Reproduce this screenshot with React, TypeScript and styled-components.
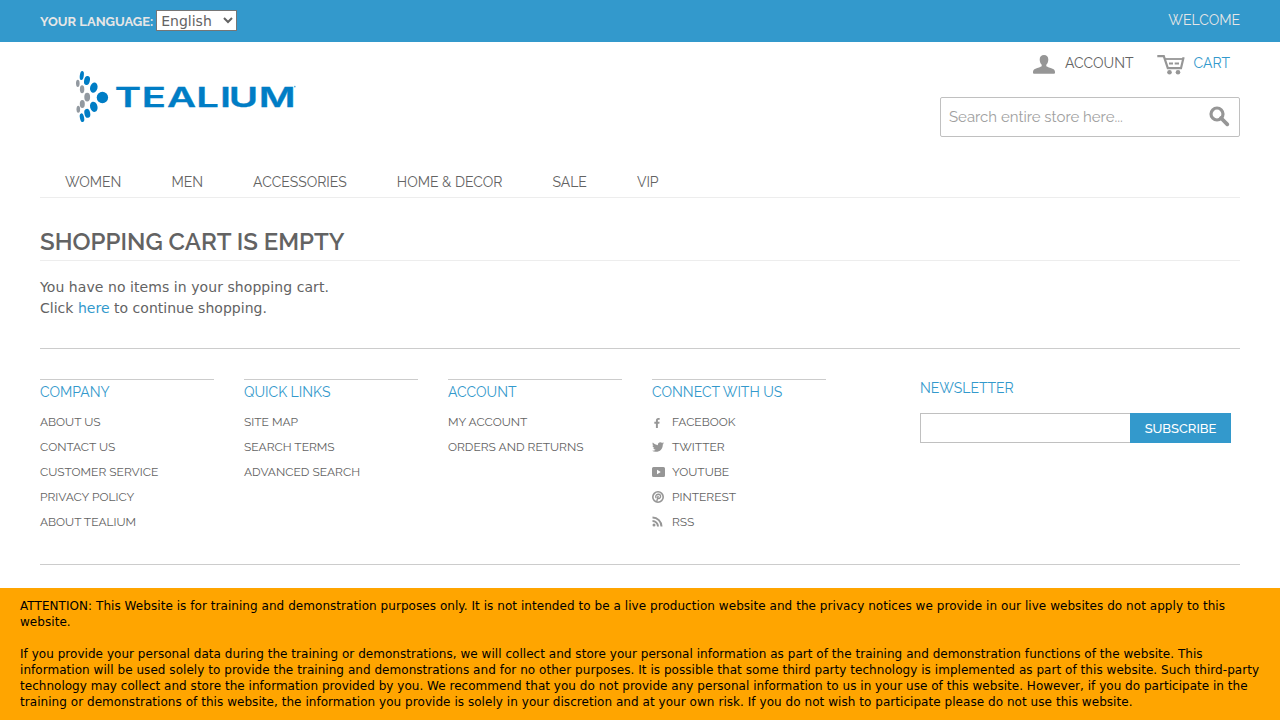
import React from "react";
import styled, { createGlobalStyle } from "styled-components";
import { FaFacebookF, FaTwitter } from "react-icons/fa";

const blue = "#3399cc";
const gray = "#636363";
const iconGray = "#969696";
const heading = 'Raleway, Lato, "Liberation Sans", sans-serif';
const body = 'Verdana, "DejaVu Sans", sans-serif';

const GlobalStyle = createGlobalStyle`
  * { box-sizing: border-box; }
  body {
    margin: 0;
    height: 720px;
    overflow: hidden;
    background: #fff;
    color: ${gray};
    font: 14px/21px ${body};
  }
  a { color: inherit; text-decoration: none; }
  ul { list-style: none; margin: 0; padding: 0; }
`;

const Page = styled.div`
  display: flex;
  flex-direction: column;
  height: 720px;
`;

const TopBar = styled.div`
  flex: none;
  display: flex;
  justify-content: space-between;
  height: 42px;
  padding: 0 40px;
  background: ${blue};
  color: #e6e6e6;
  font-family: ${heading};
`;

const Language = styled.label`
  display: flex;
  align-items: flex-start;
  gap: 3px;
  padding-top: 10px;
  font-size: 13px;
  font-weight: 700;
  line-height: 23px;
`;

const LanguageSelect = styled.select`
  width: 81px;
  height: 21px;
  padding: 0;
  border: 1px solid #767676;
  border-radius: 0;
  background: #fff;
  color: ${gray};
  font: 14px ${body};
`;

const Welcome = styled.p`
  margin: 0;
  padding-top: 10px;
  font-size: 14px;
  line-height: 20px;
`;

const Container = styled.div`
  flex: none;
  width: 1200px;
  margin: 0 auto;
`;

const Header = styled.header`
  display: flex;
  justify-content: space-between;
  height: 124px;
`;

const Logo = styled.a`
  display: block;
  padding: 24px 0 0 30px;
  svg { display: block; }
`;

const HeaderTools = styled.div`
  display: flex;
  flex-direction: column;
  align-items: flex-end;
  width: 300px;
`;

const SkipLinks = styled.div`
  display: flex;
  height: 55px;
  padding: 10px 10px 0 0;
  font: 14px/22px ${heading};
`;

const SkipLink = styled.a<{ $active?: boolean; $gap: number }>`
  display: flex;
  gap: ${(p) => p.$gap}px;
  margin-left: 24px;
  color: ${(p) => (p.$active ? blue : gray)};
`;

const SearchBox = styled.form`
  display: flex;
  align-items: center;
  justify-content: space-between;
  width: 300px;
  height: 40px;
  padding: 0 9px 0 8px;
  border: 1px solid #c0c0c0;
  border-radius: 2px;
`;

const SearchInput = styled.input`
  flex: 1;
  min-width: 0;
  border: 0;
  padding: 0;
  outline: 0;
  background: none;
  font: 15px ${heading};
  &::placeholder { color: #a0a0a0; opacity: 1; }
`;

const Nav = styled.nav`
  display: flex;
  height: 32px;
  padding: 5px 25px 0;
  gap: 50px;
  border-bottom: 1px solid #ededed;
  font: 14px/22px ${heading};
`;

const NavLink = styled.a`
  white-space: nowrap;
`;

const Title = styled.h1`
  height: 33px;
  margin: 30px 0 16px;
  border-bottom: 1px solid #ededed;
  font: 600 24px/28px ${heading};
`;

const CartText = styled.p<{ $ls: number }>`
  margin: 0;
  letter-spacing: ${(p) => p.$ls}px;
  a { color: ${blue}; }
`;

const Footer = styled.footer`
  display: flex;
  height: 217px;
  margin-top: 29px;
  padding-top: 30px;
  border-top: 1px solid #ccc;
  border-bottom: 1px solid #ccc;
  font-family: ${heading};
`;

const LinkGroup = styled.section`
  width: 174px;
  margin-right: 30px;
  border-top: 1px solid #ccc;
`;

const GroupTitle = styled.h2`
  margin: 0;
  color: ${blue};
  font-size: 14px;
  font-weight: 400;
  line-height: 24px;
`;

const LinkList = styled.ul`
  padding-top: 6px;
  font-size: 12px;
  line-height: 25px;
`;

const LinkItem = styled.li`
  display: flex;
  height: 25px;
  white-space: nowrap;
`;

const SocialIcon = styled.span`
  display: flex;
  align-items: center;
  width: 20px;
  padding-bottom: 2px;
  color: ${iconGray};
`;

const Newsletter = styled.section`
  margin: -3px 0 0 64px;
`;

const SubscribeForm = styled.form`
  display: flex;
  padding-top: 13px;
`;

const EmailInput = styled.input`
  width: 210px;
  height: 30px;
  padding: 0 8px;
  border: 1px solid #c0c0c0;
  border-right: 0;
  border-radius: 0;
  background: #fff;
`;

const SubscribeButton = styled.button`
  width: 101px;
  height: 30px;
  padding: 1px 0 0;
  border: 0;
  background: ${blue};
  color: #fff;
  font: 500 13px/29px ${heading};
`;

const Notice = styled.aside`
  flex: none;
  height: 132px;
  margin-top: 23px;
  padding: 10px 20px 0;
  background: #ffa500;
  color: #000;
  font-size: 12px;
  line-height: 16px;
`;

const NoticeLine = styled.p<{ $ls: number; $after?: boolean }>`
  margin: 0 0 ${(p) => (p.$after ? 16 : 0)}px;
  white-space: nowrap;
  letter-spacing: ${(p) => p.$ls}px;
`;

const TealiumLogo = () => (
  <svg width="230" height="62" viewBox="70 66 230 62">
    <g fill="#007dc5">
      <ellipse cx="81.8" cy="75.5" rx="2" ry="4.6" transform="rotate(8 81.8 75.5)" />
      <ellipse cx="87" cy="80.5" rx="2.9" ry="4.5" transform="rotate(12 87 80.5)" />
      <ellipse cx="93.8" cy="87.6" rx="3.7" ry="5.2" transform="rotate(14 93.8 87.6)" />
      <circle cx="102.4" cy="97.5" r="5.7" />
      <ellipse cx="93.8" cy="106.8" rx="3.7" ry="5.2" transform="rotate(-14 93.8 106.8)" />
      <ellipse cx="87.3" cy="113.3" rx="2.9" ry="4.5" transform="rotate(-12 87.3 113.3)" />
      <ellipse cx="82" cy="117.7" rx="2.1" ry="4.4" transform="rotate(-12 82 117.7)" />
      <circle cx="294.8" cy="86.6" r="0.9" opacity="0.6" />
    </g>
    <g fill="#9299a0">
      <ellipse cx="77.8" cy="83.3" rx="1.8" ry="3.6" />
      <ellipse cx="82.1" cy="89.2" rx="2.2" ry="4" />
      <ellipse cx="87.2" cy="97.1" rx="2.9" ry="4.4" />
      <ellipse cx="82.3" cy="104" rx="2.5" ry="4.1" />
      <ellipse cx="78.3" cy="109.2" rx="1.8" ry="3.5" />
    </g>
    <text
      transform="scale(1.48 1)" x="77.6 95.8 112.8 132.6 148.6 154.6 174.8" y="106.8"
      fill="#007dc5" stroke="#007dc5" strokeWidth="0.3"
      fontFamily="Inter, sans-serif" fontSize="27" fontWeight="600"
    >
      TEALIUM
    </text>
  </svg>
);

const PersonIcon = () => (
  <svg width="22" height="22" viewBox="0 0 22 22" fill={iconGray}>
    <path d="M11 3C13.7 3 15.3 4.7 15.3 7.5C15.3 9.7 14.6 11.6 13.3 12.8V14.2C14.5 15 17 15.7 19.5 16.7C21.2 17.4 22 18.4 22 20V20.8C22 21.4 21.7 21.7 21 21.7H1C.3 21.7 0 21.4 0 20.8V20C0 18.4.8 17.4 2.5 16.7C5 15.7 7.5 15 8.7 14.2V12.8C7.4 11.6 6.7 9.7 6.7 7.5C6.7 4.7 8.3 3 11 3Z" />
  </svg>
);

const CartIcon = () => (
  <svg width="28" height="23" viewBox="0 0 28 23" fill="none" stroke={iconGray}>
    <path d="M.3 4.1H6.8L10.8 16.2H24L26.6 5.3" strokeWidth="2.2" />
    <path d="M7.5 7H26" strokeWidth="1.8" />
    <path d="M12 11.5H16M17.7 11.5H22" strokeWidth="2" />
    <circle cx="12.5" cy="20.3" r="2.3" fill={iconGray} stroke="none" />
    <circle cx="21" cy="20.3" r="2.3" fill={iconGray} stroke="none" />
  </svg>
);

const SearchIcon = () => (
  <svg width="22" height="22" viewBox="0 0 22 22" fill="none" stroke={iconGray}>
    <circle cx="9" cy="8" r="6" strokeWidth="3.2" />
    <path d="M13 12L19.3 18.3" strokeWidth="3.8" strokeLinecap="round" />
  </svg>
);

const YoutubeIcon = () => (
  <svg width="13" height="10" viewBox="0 0 13 10" fill="currentColor">
    <path fillRule="evenodd" d="M1.5 0H11.5Q13 0 13 1.5V8.5Q13 10 11.5 10H1.5Q0 10 0 8.5V1.5Q0 0 1.5 0ZM5 2.8V7.2L8.8 5Z" />
  </svg>
);

const PinterestIcon = () => (
  <svg width="12" height="12" viewBox="0 0 12 12" fill="none" stroke="currentColor">
    <circle cx="6" cy="6" r="5.2" strokeWidth="1.6" />
    <path d="M4.3 7C2.9 5.3 4.2 3.3 6.2 3.3C8.3 3.3 8.9 4.8 8.4 6.3C7.9 7.7 6.3 7.9 5.8 7M6.2 4.8L4.7 10.6" strokeWidth="1.4" />
  </svg>
);

const RssIcon = () => (
  <svg width="11" height="11" viewBox="0 0 11 11" fill="none" stroke="currentColor">
    <circle cx="2" cy="9" r="1.5" fill="currentColor" stroke="none" />
    <path d="M.5 5A5.5 5.5 0 0 1 6 10.5M.5 1.5A9 9 0 0 1 9.5 10.5" strokeWidth="2" />
  </svg>
);

const FacebookMark = styled(FaFacebookF)`
  transform: translateY(1px);
`;

const navLinks = ["WOMEN", "MEN", "ACCESSORIES", "HOME & DECOR", "SALE", "VIP"];

type Item = { text: string; icon?: React.ReactNode };
const groups: { title: string; items: Item[] }[] = [
  {
    title: "COMPANY",
    items: [
      { text: "ABOUT US" }, { text: "CONTACT US" }, { text: "CUSTOMER SERVICE" },
      { text: "PRIVACY POLICY" }, { text: "ABOUT TEALIUM" },
    ],
  },
  {
    title: "QUICK LINKS",
    items: [{ text: "SITE MAP" }, { text: "SEARCH TERMS" }, { text: "ADVANCED SEARCH" }],
  },
  {
    title: "ACCOUNT",
    items: [{ text: "MY ACCOUNT" }, { text: "ORDERS AND RETURNS" }],
  },
  {
    title: "CONNECT WITH US",
    items: [
      { text: "FACEBOOK", icon: <FacebookMark size={10} /> },
      { text: "TWITTER", icon: <FaTwitter size={12} /> },
      { text: "YOUTUBE", icon: <YoutubeIcon /> },
      { text: "PINTEREST", icon: <PinterestIcon /> },
      { text: "RSS", icon: <RssIcon /> },
    ],
  },
];

const notice: [string, number, boolean?][] = [
  ["ATTENTION: This Website is for training and demonstration purposes only. It is not intended to be a live production website and the privacy notices we provide in our live websites do not apply to this", 0.053],
  ["website.", 0.05, true],
  ["If you provide your personal data during the training or demonstrations, we will collect and store your personal information as part of the training and demonstration functions of the website. This", 0.037],
  ["information will be used solely to provide the training and demonstrations and for no other purposes. It is possible that some third party technology is implemented as part of this website. Such third-party", 0.046],
  ["technology may collect and store the information provided by you. We recommend that you do not provide any personal information to us in your use of this website. However, if you do participate in the", 0.026],
  ["training or demonstrations of this website, the information you provide is solely in your discretion and at your own risk. If you do not wish to participate please do not use this website.", 0.049],
];

export default function App() {
  return (
    <Page>
      <GlobalStyle />
      <TopBar>
        <Language>
          YOUR LANGUAGE:
          <LanguageSelect defaultValue="en">
            <option value="en">English</option>
          </LanguageSelect>
        </Language>
        <Welcome>WELCOME</Welcome>
      </TopBar>
      <Container>
        <Header>
          <Logo href="#"><TealiumLogo /></Logo>
          <HeaderTools>
            <SkipLinks>
              <SkipLink href="#" $gap={10}><PersonIcon />ACCOUNT</SkipLink>
              <SkipLink href="#" $gap={8} $active><CartIcon />CART</SkipLink>
            </SkipLinks>
            <SearchBox>
              <SearchInput placeholder="Search entire store here..." />
              <SearchIcon />
            </SearchBox>
          </HeaderTools>
        </Header>
        <Nav>
          {navLinks.map((text) => <NavLink href="#" key={text}>{text}</NavLink>)}
        </Nav>
        <Title>SHOPPING CART IS EMPTY</Title>
        <CartText $ls={0.065}>You have no items in your shopping cart.</CartText>
        <CartText $ls={0.02}>Click <a href="#">here</a> to continue shopping.</CartText>
        <Footer>
          {groups.map((g) => (
            <LinkGroup key={g.title}>
              <GroupTitle>{g.title}</GroupTitle>
              <LinkList>
                {g.items.map((it) => (
                  <LinkItem key={it.text}>
                    {it.icon && <SocialIcon>{it.icon}</SocialIcon>}
                    <a href="#">{it.text}</a>
                  </LinkItem>
                ))}
              </LinkList>
            </LinkGroup>
          ))}
          <Newsletter>
            <GroupTitle>NEWSLETTER</GroupTitle>
            <SubscribeForm>
              <EmailInput />
              <SubscribeButton type="button">SUBSCRIBE</SubscribeButton>
            </SubscribeForm>
          </Newsletter>
        </Footer>
      </Container>
      <Notice>
        {notice.map(([text, ls, after]) => <NoticeLine key={text} $ls={ls} $after={after}>{text}</NoticeLine>)}
      </Notice>
    </Page>
  );
}
